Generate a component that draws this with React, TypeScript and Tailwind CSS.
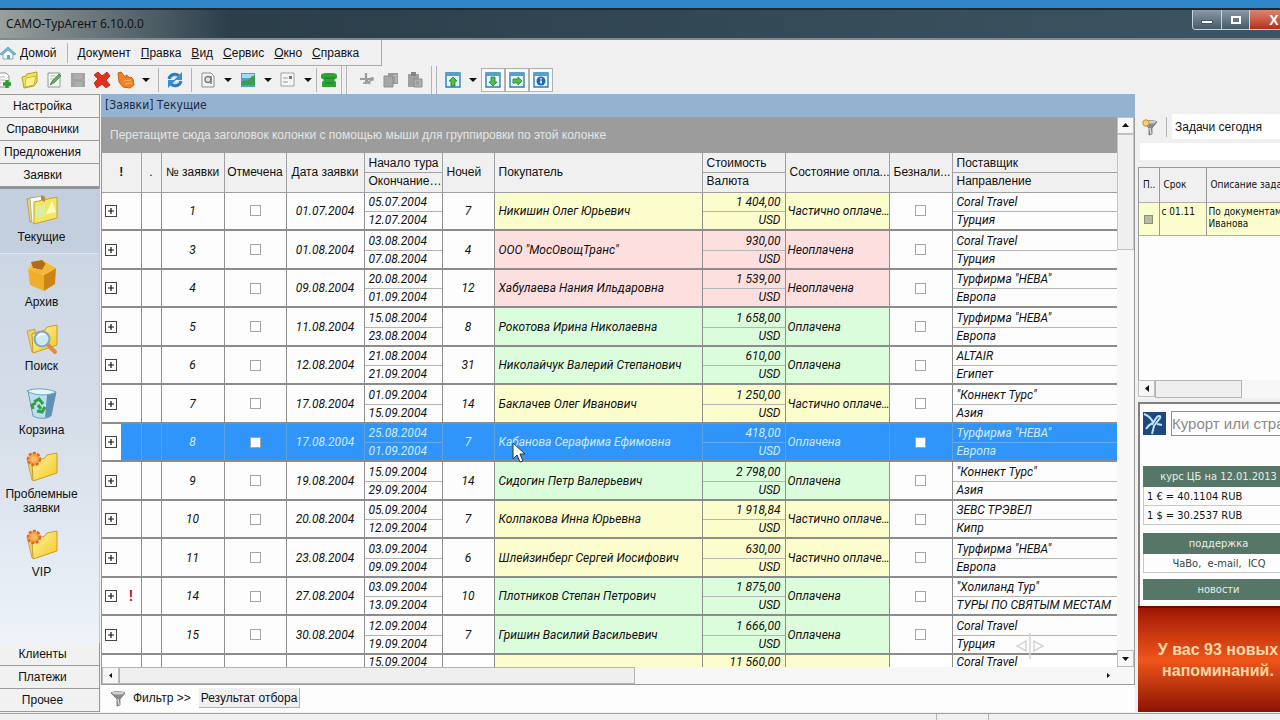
import type { ReactNode } from "react";

type Status = "part" | "none" | "paid";

type Order = {
  id: number;
  date: string;
  start: string;
  end: string;
  nights: number;
  buyer: string;
  price: string;
  status: Status;
  supplier: string;
  region: string;
  alert?: boolean;
};

const orders: Order[] = [
  { id: 1, date: "01.07.2004", start: "05.07.2004", end: "12.07.2004", nights: 7, buyer: "Никишин Олег Юрьевич", price: "1 404,00", status: "part", supplier: "Coral Travel", region: "Турция" },
  { id: 3, date: "01.08.2004", start: "03.08.2004", end: "07.08.2004", nights: 4, buyer: 'ООО "МосОвощТранс"', price: "930,00", status: "none", supplier: "Coral Travel", region: "Турция" },
  { id: 4, date: "09.08.2004", start: "20.08.2004", end: "01.09.2004", nights: 12, buyer: "Хабулаева Нания Ильдаровна", price: "1 539,00", status: "none", supplier: 'Турфирма "НЕВА"', region: "Европа" },
  { id: 5, date: "11.08.2004", start: "15.08.2004", end: "23.08.2004", nights: 8, buyer: "Рокотова Ирина Николаевна", price: "1 658,00", status: "paid", supplier: 'Турфирма "НЕВА"', region: "Европа" },
  { id: 6, date: "12.08.2004", start: "21.08.2004", end: "21.09.2004", nights: 31, buyer: "Николайчук Валерий Степанович", price: "610,00", status: "paid", supplier: "ALTAIR", region: "Египет" },
  { id: 7, date: "17.08.2004", start: "01.09.2004", end: "15.09.2004", nights: 14, buyer: "Баклачев Олег Иванович", price: "1 250,00", status: "part", supplier: '"Коннект Турс"', region: "Азия" },
  { id: 8, date: "17.08.2004", start: "25.08.2004", end: "01.09.2004", nights: 7, buyer: "Кабанова Серафима Ефимовна", price: "418,00", status: "paid", supplier: 'Турфирма "НЕВА"', region: "Европа" },
  { id: 9, date: "19.08.2004", start: "15.09.2004", end: "29.09.2004", nights: 14, buyer: "Сидогин Петр Валерьевич", price: "2 798,00", status: "paid", supplier: '"Коннект Турс"', region: "Азия" },
  { id: 10, date: "20.08.2004", start: "05.09.2004", end: "12.09.2004", nights: 7, buyer: "Колпакова Инна Юрьевна", price: "1 918,84", status: "part", supplier: "ЗЕВС ТРЭВЕЛ", region: "Кипр" },
  { id: 11, date: "23.08.2004", start: "03.09.2004", end: "09.09.2004", nights: 6, buyer: "Шлейзинберг Сергей Иосифович", price: "630,00", status: "part", supplier: 'Турфирма "НЕВА"', region: "Европа" },
  { id: 14, date: "27.08.2004", start: "03.09.2004", end: "13.09.2004", nights: 10, buyer: "Плотников Степан Петрович", price: "1 875,00", status: "paid", supplier: '"Холиланд Тур"', region: "ТУРЫ ПО СВЯТЫМ МЕСТАМ", alert: true },
  { id: 15, date: "30.08.2004", start: "12.09.2004", end: "19.09.2004", nights: 7, buyer: "Гришин Василий Васильевич", price: "1 666,00", status: "paid", supplier: "Coral Travel", region: "Турция" },
];

const statusText = { part: "Частично оплаче…", none: "Неоплачена", paid: "Оплачена" };
const statusBg = { part: "bg-[#fcfdcd]", none: "bg-[#fddfe0]", paid: "bg-[#dcfddc]" };

/* ---------- icons ---------- */

function Icon({ children, size = 18 }: { children: ReactNode; size?: number }) {
  return (
    <svg width={size} height={size} viewBox="0 0 18 18" fill="none" className="shrink-0">
      {children}
    </svg>
  );
}

const Caret = () => (
  <svg width="10" height="6" viewBox="0 0 10 6" className="shrink-0">
    <path d="M1 1h8L5 5z" fill="#111" />
  </svg>
);

const NewIcon = () => (
  <Icon>
    <path d="M-2 2H9l3 3v11H-2z" fill="#fdfdfd" stroke="#8a9490" />
    <path d="M1 6h7M1 9h7M1 12h4" stroke="#a9b3ae" />
    <path d="M10 9v8M6 13h8" stroke="#2f9a33" strokeWidth="3.4" />
  </Icon>
);

const OpenIcon = () => (
  <Icon>
    <path d="M1 6l4-1 1-2 10-2v10l-3 4-10 2z" fill="#f6e24c" stroke="#b69a2a" />
    <path d="M5 7l10-2-2 9-9 2z" fill="#fdf391" stroke="#c7ab38" strokeWidth=".8" />
  </Icon>
);

const EditIcon = () => (
  <Icon>
    <path d="M3 2h12v14H3z" fill="#f8fbf8" stroke="#8c9a92" />
    <path d="M5 5h6M5 8h4" stroke="#b2bcb6" />
    <path d="M5 14l2-4 7-7 2 2-7 7z" fill="#63a96a" stroke="#477a4b" strokeWidth=".7" />
  </Icon>
);

const SaveIcon = () => (
  <Icon>
    <path d="M2 2h14v14H2z" fill="#a3a3a3" />
    <path d="M5 3h8v5H5zM6 11h7v5H6z" fill="#adadad" />
  </Icon>
);

const DeleteIcon = () => (
  <Icon>
    <path d="M1 4l4-3 4 4 5-4 3 4-4 4 4 5-4 3-4-4-5 4-3-5 4-4z" fill="#e3301c" stroke="#b3200f" strokeWidth=".8" />
  </Icon>
);

const HandIcon = () => (
  <Icon>
    <path d="M1 2l3-1 5 6V4l2 1 1 2 2-1 2 2 1 6-4 3-7-1-4-5z" fill="#f08125" stroke="#c9600f" />
    <path d="M7 10l7-1M8 13l7-1" stroke="#fcb978" />
  </Icon>
);

const RefreshIcon = () => (
  <Icon>
    <path d="M3 8c1-5 7-6 10-3M15 10c-1 5-7 6-10 3" stroke="#2f79bd" strokeWidth="3" />
    <path d="M16 1v8H8zM2 17V9h8z" fill="#3c8ed2" />
    <path d="M5 8c1-2 4-3 6-2M13 10c-1 2-4 3-6 2" stroke="#a6d5f2" />
  </Icon>
);

const PreviewIcon = () => (
  <Icon>
    <path d="M3 2h9l3 3v11H3z" fill="#f4f4f4" stroke="#8d8d8d" />
    <circle cx="9" cy="8.500" r="3" fill="#dfe3e6" stroke="#7e7e7e" strokeWidth="1.4" />
    <path d="M12 5v8" stroke="#7e7e7e" strokeWidth="1.6" />
  </Icon>
);

const PictureIcon = () => (
  <Icon>
    <path d="M2 2h14v14H2z" fill="#4b9fd2" />
    <path d="M3 3h12v4H3z" fill="#a9d9ee" />
    <path d="M2 14v-3l4-2 3 1 4-5h3v9z" fill="#3d9d50" />
  </Icon>
);

const FormIcon = () => (
  <Icon>
    <path d="M2 2h13v13H2z" fill="#f6f6f6" stroke="#a1a1a1" />
    <path d="M4 7h5M4 11h5" stroke="#999" />
    <path d="M10 5h3v3h-3z" fill="#777" />
  </Icon>
);

const PhoneIcon = () => (
  <Icon>
    <path d="M1 7V4c1-2 4-2 8-2s7 0 8 2v3l-3 2 2 2v5H2v-5l2-2z" fill="#2da436" />
    <path d="M4 7h10M5 12h8" stroke="#197b24" />
  </Icon>
);

const CutIcon = () => (
  <Icon>
    <path d="M8 2v11M2 8h13" stroke="#9b9b9b" strokeWidth="2.2" />
    <path d="M8 8l4 5M5 12h6l3-5" stroke="#9b9b9b" strokeWidth="1.6" />
    <circle cx="14" cy="8" r="2" fill="#9b9b9b" />
  </Icon>
);

const CopyIcon = () => (
  <Icon>
    <path d="M6 2h10v11H6z" fill="#9c9c9c" />
    <path d="M2 5h9v11H2z" fill="#a6a6a6" stroke="#8d8d8d" />
    <path d="M11 5l3-1v8" stroke="#c6c6c6" />
  </Icon>
);

const PasteIcon = () => (
  <Icon>
    <path d="M2 3h11v13H2z" fill="#a0a0a0" />
    <path d="M5 1h5v4H5z" fill="#858585" />
    <path d="M8 8h8v8H8z" fill="#b0b0b0" stroke="#8d8d8d" />
    <path d="M10 11h3M10 13h3" stroke="#8d8d8d" />
  </Icon>
);

function PanelIcon({ kind }: { kind: "up" | "down" | "right" | "info" }) {
  return (
    <Icon>
      <path d="M2 2h14v14H2z" fill="#e6f7fb" stroke="#2c7fb4" strokeWidth="1.4" />
      <path d="M2 2h14v3H2z" fill="#4ea3cf" />
      {kind === "up" && <path d="M9 6l4 4h-2v5H7v-5H5z" fill="#54c04d" stroke="#1f7c2a" strokeWidth=".8" />}
      {kind === "down" && <path d="M9 15l4-4h-2V6H7v5H5z" fill="#54c04d" stroke="#1f7c2a" strokeWidth=".8" />}
      {kind === "right" && <path d="M14 10l-4-4v2H5v4h5v2z" fill="#54c04d" stroke="#1f7c2a" strokeWidth=".8" />}
      {kind === "info" && (
        <>
          <circle cx="9" cy="10" r="4.5" fill="#2565b8" />
          <path d="M9 7v1.500M9 9.500v3" stroke="#fff" strokeWidth="1.6" />
        </>
      )}
    </Icon>
  );
}

const HomeIcon = () => (
  <svg width="16" height="16" viewBox="0 0 16 16" className="shrink-0">
    <path d="M3 8v6h10V8L8 4z" fill="#f3f8fa" stroke="#7fa9b8" />
    <path d="M0 9l8-7 8 7-2 1-6-5-6 5z" fill="#73b7cf" stroke="#4b8ea8" strokeWidth=".6" />
    <path d="M7 10h3v4H7z" fill="#6f9fae" />
  </svg>
);

function FunnelIcon({ star }: { star?: boolean }) {
  return (
    <svg width="18" height="18" viewBox="0 0 18 18" className="shrink-0">
      <path d="M2 4c3-2 11-2 14 0l-5 6v6l-3 1v-7z" fill="#8b8b8b" stroke="#6c6c6c" strokeWidth=".8" />
      <path d="M9 10l1 6" stroke="#dcdcdc" strokeWidth="1.4" />
      <ellipse cx="9" cy="4" rx="6" ry="1.6" fill="#d0d0d0" />
      {star && <circle cx="5" cy="5" r="3.2" fill="#f7cf7c" stroke="#c98b2d" />}
    </svg>
  );
}

function Folder({ children }: { children?: ReactNode }) {
  return (
    <svg width="32" height="32" viewBox="0 0 32 32" className="shrink-0">
      <defs>
        <linearGradient id="folderFill" x1="0" y1="0" x2="1" y2="1">
          <stop offset="0" stopColor="#fff6a6" />
          <stop offset="1" stopColor="#f5c51f" />
        </linearGradient>
      </defs>
      <path d="M1 8l5 21 3-2V6z" fill="#ecd166" stroke="#bd9c33" strokeWidth=".8" />
      <path d="M6 11l13-4 2-3 10-2v20L7 30z" fill="url(#folderFill)" stroke="#c79d26" />
      {children}
    </svg>
  );
}

const CurrentIcon = () => (
  <svg width="32" height="32" viewBox="0 0 32 32">
    <path d="M1 5l3 23 4-1V3z" fill="#e9d36b" stroke="#b59b3e" strokeWidth=".8" />
    <path d="M4 4l14-2 1 24L6 29z" fill="#fbfbf4" stroke="#a9a78c" strokeWidth=".8" />
    <path d="M8 8l23-5v21L8 30z" fill="#f4e663" stroke="#bfa52f" />
    <path d="M10 12l9-2v12l-9 2z" fill="#d9eda3" />
    <path d="M20 20l6-13 4 11z" fill="#fffbc0" />
    <path d="M15 1l4 2v5l-4-2z" fill="#b08d42" />
  </svg>
);

const ArchiveIcon = () => (
  <svg width="32" height="32" viewBox="0 0 32 32">
    <path d="M2 10l16 6v16L4 26z" fill="#f0ae2c" />
    <path d="M18 16l12-7-1 16-11 7z" fill="#cc8513" />
    <path d="M2 10l4-7 11-2 13 8-12 7z" fill="#f8c556" />
    <path d="M5 3l2 6 9 2 4-6-4-4z" fill="#b06c16" />
    <path d="M2 10l5-1 9 2 2 5zM30 9l-10-5-4 7 2 5z" fill="#f5b83c" />
  </svg>
);

const SearchFolderIcon = () => (
  <Folder>
    <path d="M21 21l8 8" stroke="#e28b3f" strokeWidth="4" strokeLinecap="round" />
    <circle cx="16" cy="16" r="7.5" fill="#cfeaf7" stroke="#7fa8bd" strokeWidth="2" />
    <path d="M12 14c1-3 4-4 7-2" stroke="#fff" strokeWidth="1.6" fill="none" />
  </Folder>
);

const BinIcon = () => (
  <svg width="32" height="32" viewBox="0 0 32 32">
    <path d="M2 4l5 25c5 3 14 3 18 0l5-24z" fill="#bcdfed" stroke="#7297ac" />
    <path d="M21 8l9-3-5 24-6 2z" fill="#5b93b8" />
    <path d="M1 4c6-3 20-3 29 1-6 4-22 4-29-1z" fill="#e7f5fa" stroke="#6fa3be" />
    <path d="M8 15l5-3 4 5M19 20l-3 5-5-1M7 22l-1-4 4-2M12 18l3 4" fill="none" stroke="#2fa046" strokeWidth="3" />
  </svg>
);

const StarFolderIcon = () => (
  <Folder>
    <circle cx="8" cy="8" r="6" fill="#f8a14c" stroke="#e1672b" strokeWidth="2.4" strokeDasharray="3 1.4" />
    <circle cx="8" cy="8" r="3" fill="#fbb95f" />
  </Folder>
);

/* ---------- window parts ---------- */

function TitleBar() {
  return (
    <header className="flex h-8 shrink-0 items-start justify-between border-t-2 border-b-2 border-t-[#1b2a35] border-b-[#7d8a8f] bg-linear-to-r from-[#9aa09d] via-[#2b3e4a] via-18% to-[#3d5563]">
      <h1 className="px-1.5 pt-1 font-['Noto_Sans'] text-xs leading-5 text-[#10161a]">САМО-ТурАгент 6.10.0.0</h1>
      <div className="flex h-5 w-[88px] shrink-0 overflow-hidden rounded-bl border-b border-l border-[#c9d3da]">
        <button aria-label="Свернуть" className="flex w-[29px] shrink-0 items-center justify-center border-r border-[#c9d3da] bg-linear-to-b from-[#8b9ba6] to-[#465b69]">
          <span className="mt-1 h-1 w-3 border border-[#4d5960] bg-white" />
        </button>
        <button aria-label="Развернуть" className="flex w-[28px] shrink-0 items-center justify-center border-r border-[#c9d3da] bg-linear-to-b from-[#8b9ba6] to-[#465b69]">
          <span className="h-2 w-2.5 border-2 border-white" />
        </button>
        <button aria-label="Закрыть" className="flex w-[48px] shrink-0 items-center justify-center bg-linear-to-b from-[#d98672] to-[#b52b16] text-sm font-bold text-white">
          X
        </button>
      </div>
    </header>
  );
}

const menu = [
  ["Д", "окумент"],
  ["П", "равка"],
  ["В", "ид"],
  ["С", "ервис"],
  ["О", "кно"],
  ["С", "правка"],
];

function MenuBar() {
  return (
    <nav className="flex h-[26px] w-[382px] shrink-0 items-center border-r border-b border-[#a9a9a9] text-xs">
      <a href="#home" className="flex items-center gap-1">
        <HomeIcon />
        Домой
      </a>
      <span className="mr-[10px] ml-[10px] h-5 w-px bg-[#b5b5b5]" />
      <div className="flex gap-[10px]">
        {menu.map(([first, rest]) => (
          <a key={rest} href={"#" + rest}>
            <u>{first}</u>
            {rest}
          </a>
        ))}
      </div>
    </nav>
  );
}

function ToolButton({ label, on, children }: { label: string; on?: boolean; children: ReactNode }) {
  return (
    <button
      aria-label={label}
      className={on ? "flex h-6 w-6 items-center justify-center border border-[#b0b0b0] bg-[#f9f9f9]" : "flex h-6 w-6 items-center justify-center"}
    >
      {children}
    </button>
  );
}

function DropButton() {
  return (
    <button aria-label="Ещё" className="flex h-6 w-4 items-center justify-center">
      <Caret />
    </button>
  );
}

const Sep = () => <span className="mx-1 h-6 w-px shrink-0 bg-[#b5b5b5]" />;

function Toolbar() {
  return (
    <div className="flex h-7 shrink-0 items-center">
      <div className="-ml-1.5 flex items-center">
        <ToolButton label="Новый"><NewIcon /></ToolButton>
        <ToolButton label="Открыть"><OpenIcon /></ToolButton>
        <ToolButton label="Изменить"><EditIcon /></ToolButton>
        <ToolButton label="Сохранить"><SaveIcon /></ToolButton>
        <ToolButton label="Удалить"><DeleteIcon /></ToolButton>
        <ToolButton label="Пометить"><HandIcon /></ToolButton>
        <DropButton />
        <Sep />
        <ToolButton label="Обновить"><RefreshIcon /></ToolButton>
        <Sep />
        <ToolButton label="Просмотр"><PreviewIcon /></ToolButton>
        <DropButton />
        <ToolButton label="Изображение"><PictureIcon /></ToolButton>
        <DropButton />
        <ToolButton label="Форма"><FormIcon /></ToolButton>
        <DropButton />
        <span className="h-6 w-px shrink-0 bg-[#b5b5b5]" />
        <ToolButton label="Телефон"><PhoneIcon /></ToolButton>
      </div>
      <span className="mr-2 h-7 w-[6px] border-x border-[#b5b5b5]" />
      <ToolButton label="Вырезать"><CutIcon /></ToolButton>
      <ToolButton label="Копировать"><CopyIcon /></ToolButton>
      <ToolButton label="Вставить"><PasteIcon /></ToolButton>
      <span className="mx-1 h-7 w-[6px] border-x border-[#b5b5b5]" />
      <ToolButton label="Панель сверху"><PanelIcon kind="up" /></ToolButton>
      <DropButton />
      <ToolButton label="Панель снизу" on><PanelIcon kind="down" /></ToolButton>
      <ToolButton label="Панель справа" on><PanelIcon kind="right" /></ToolButton>
      <ToolButton label="Информация" on><PanelIcon kind="info" /></ToolButton>
    </div>
  );
}

const folders = [
  { name: "Текущие", icon: <CurrentIcon />, active: true },
  { name: "Архив", icon: <ArchiveIcon /> },
  { name: "Поиск", icon: <SearchFolderIcon /> },
  { name: "Корзина", icon: <BinIcon /> },
  { name: "Проблемные заявки", icon: <StarFolderIcon /> },
  { name: "VIP", icon: <StarFolderIcon /> },
];

function SideButton({ children }: { children: ReactNode }) {
  return (
    <button className="h-[23px] shrink-0 border-r border-b border-[#9a9a9a] bg-[#f1f1f1] pr-[14px] text-center">
      {children}
    </button>
  );
}

function Sidebar() {
  return (
    <aside className="flex w-[100px] shrink-0 flex-col border-t border-[#9a9a9a] text-xs">
      <SideButton>Настройка</SideButton>
      <SideButton>Справочники</SideButton>
      <SideButton>Предложения</SideButton>
      <SideButton>Заявки</SideButton>
      <div className="flex flex-1 flex-col border-t-2 border-r border-t-[#8a949c] border-r-[#c2cbd3] bg-linear-to-b from-[#c9d4e2] via-[#d5dde8] to-[#eef3fa]">
        {folders.map((f) => (
          <button
            key={f.name}
            className={
              "flex flex-col items-center gap-1 pt-[5px] pr-[16px] pb-[9px] leading-[14px] " +
              (f.active ? "border-b border-[#dde5ee] bg-[#c3cfde]" : "")
            }
          >
            {f.icon}
            {f.name}
          </button>
        ))}
      </div>
      <SideButton>Клиенты</SideButton>
      <SideButton>Платежи</SideButton>
      <SideButton>Прочее</SideButton>
    </aside>
  );
}

/* ---------- orders grid ---------- */

type PairProps = { top: string; bottom: string; line: string; align?: "left" | "right" };

function Pair({ top, bottom, line, align = "left" }: PairProps) {
  return (
    <div className={"whitespace-nowrap " + (align === "right" ? "text-right" : "")}>
      <div className={"border-b px-1 leading-[18px] " + line}>{top}</div>
      <div className="px-1 leading-[17px]">{bottom}</div>
    </div>
  );
}

function Check({ label }: { label: string }) {
  return <input type="checkbox" aria-label={label} className="mx-auto block size-[11px] appearance-none border border-[#a5a5a5] bg-white" />;
}

function OrderRow({ order }: { order: Order }) {
  const selected = order.id === 8;
  const cell = selected ? "border-r border-[#5f9fdc] overflow-hidden" : "border-r border-[#8f8f8f] overflow-hidden";
  const bg = selected ? "" : statusBg[order.status];
  const line = selected ? "border-[#62abef]" : "border-[#b5b5b5]";
  return (
    <tr className={"border-b-2 border-[#8c8c8c] odd:h-[38px] even:h-[39px] " + (selected ? "bg-[#2f95fa] text-[#cfeaff]" : "")}>
      <td className={cell}>
        <div className={"flex h-[36px] items-center " + (selected ? "w-[19px] bg-white" : "")}>
          <button
            aria-label={"Развернуть заявку " + order.id}
            className="ml-[3px] flex size-3 shrink-0 items-center justify-center border border-[#444] bg-white"
          >
            <svg width="8" height="8" viewBox="0 0 8 8"><path d="M1 4h6M4 1v6" stroke="#111" strokeWidth="1.2" /></svg>
          </button>
          {order.alert && <b className="ml-3 text-sm text-[#c3122f] not-italic">!</b>}
        </div>
      </td>
      <td className={cell} />
      <td className={cell + " text-center"}>{order.id}</td>
      <td className={cell}><Check label="Отмечена" /></td>
      <td className={cell + " px-1 text-center"}>{order.date}</td>
      <td className={cell}><Pair top={order.start} bottom={order.end} line={line} /></td>
      <td className={cell + " text-center"}>{order.nights}</td>
      <td className={cell + " px-1 whitespace-nowrap " + bg}>{order.buyer}</td>
      <td className={cell + " " + bg}><Pair top={order.price} bottom="USD" line={line} align="right" /></td>
      <td className={cell + " pl-0.5 whitespace-nowrap " + bg}>{statusText[order.status]}</td>
      <td className={cell}><Check label="Безналичный расчёт" /></td>
      <td className="overflow-hidden"><Pair top={order.supplier} bottom={order.region} line={line} /></td>
    </tr>
  );
}

function OrdersTable() {
  const th = "border-r border-[#a0a0a0] px-1 font-normal";
  const pairTh = "border-r border-[#a0a0a0] font-normal";
  return (
    <table className="w-full table-fixed border-collapse text-xs">
      <colgroup>
        <col className="w-[39px]" />
        <col className="w-[20px]" />
        <col className="w-[63px]" />
        <col className="w-[62px]" />
        <col className="w-[78px]" />
        <col className="w-[78px]" />
        <col className="w-[52px]" />
        <col className="w-[208px]" />
        <col className="w-[83px]" />
        <col className="w-[104px]" />
        <col className="w-[63px]" />
        <col />
      </colgroup>
      <thead>
        <tr className="h-[39px] border-b border-[#a0a0a0] bg-[#f0f0f0] text-left whitespace-nowrap">
          <th className={th + " text-center"}><b>!</b></th>
          <th className={th + " text-center"}>.</th>
          <th className={pairTh + " text-center"}>№ заявки</th>
          <th className={pairTh + " text-center"}>Отмечена</th>
          <th className={pairTh + " text-center"}>Дата заявки</th>
          <th className={pairTh}><Pair top="Начало тура" bottom="Окончание…" line="border-[#a0a0a0]" /></th>
          <th className={th}>Ночей</th>
          <th className={th}>Покупатель</th>
          <th className={pairTh}><Pair top="Стоимость" bottom="Валюта" line="border-[#a0a0a0]" /></th>
          <th className={th}>Состояние опла...</th>
          <th className={th}>Безнали...</th>
          <th className="font-normal"><Pair top="Поставщик" bottom="Направление" line="border-[#a0a0a0]" /></th>
        </tr>
      </thead>
      <tbody className="font-['Roboto',sans-serif] italic">
        {orders.map((o) => (
          <OrderRow key={o.id} order={o} />
        ))}
        {/* next order, only its first line shows */}
        <tr className="bg-white whitespace-nowrap">
          <td className="border-r border-[#8f8f8f]" />
          <td className="border-r border-[#8f8f8f]" />
          <td className="border-r border-[#8f8f8f]" />
          <td className="border-r border-[#8f8f8f]" />
          <td className="border-r border-[#8f8f8f]" />
          <td className="border-r border-[#8f8f8f] px-1 leading-[15px]">15.09.2004</td>
          <td className="border-r border-[#8f8f8f]" />
          <td className="border-r border-[#8f8f8f] bg-[#fcfdcd]" />
          <td className="border-r border-[#8f8f8f] bg-[#fcfdcd] px-1 text-right leading-[15px]">11 560,00</td>
          <td className="border-r border-[#8f8f8f] bg-[#fcfdcd]" />
          <td className="border-r border-[#8f8f8f]" />
          <td className="px-1 leading-[15px]">Coral Travel</td>
        </tr>
      </tbody>
    </table>
  );
}

function ScrollButton({ label, d }: { label: string; d: string }) {
  return (
    <button aria-label={label} className="flex size-[17px] shrink-0 items-center justify-center border border-[#bdbdbd] bg-[#f6f6f6]">
      <svg width="9" height="9" viewBox="0 0 9 9"><path d={d} fill="#111" /></svg>
    </button>
  );
}

function Orders() {
  return (
    <main className="ml-px flex min-w-0 flex-1 flex-col">
      <h2 className="h-[23px] shrink-0 bg-[#95b3d0] px-1 font-['DejaVu_Sans_Condensed'] text-xs leading-[22px] text-[#1a2c4c]">[Заявки] Текущие</h2>
      <div className="flex min-h-0 flex-1 border-l border-[#9a9a9a]">
        <div className="relative min-w-0 flex-1 overflow-hidden bg-[#fdfdfd]">
          <p className="h-9 bg-[#9c9c9c] px-2 text-xs leading-9 whitespace-nowrap text-[#e4e4e4]">
            Перетащите сюда заголовок колонки с помощью мыши для группировки по этой колонке
          </p>
          <OrdersTable />
          {/* mouse pointer over the selected row */}
          <svg width="14" height="21" viewBox="0 0 14 21" className="absolute top-[325px] left-[410px]">
            <path d="M1 1v16l4-4 3 7 3-1-3-7h5z" fill="#fff" stroke="#333" />
          </svg>
          <svg width="32" height="26" viewBox="0 0 32 26" className="absolute top-[516px] left-[912px]">
            <path d="M12 8v10l-9-5zM20 8v10l9-5zM16 0v26" fill="none" stroke="#d4d4d4" strokeWidth="1.5" />
          </svg>
        </div>
        <div className="flex w-[18px] shrink-0 flex-col border-r border-[#9a9a9a] bg-[#f7f7f7]">
          <ScrollButton label="Вверх" d="M4.5 2L8 6H1z" />
          <div className="h-[116px] border border-[#c4c4c4] bg-[#efefef]" />
          <div className="flex-1" />
          <ScrollButton label="Вниз" d="M4.5 7L8 3H1z" />
        </div>
      </div>
      <div className="flex shrink-0 border-r border-b border-l border-[#9a9a9a] bg-[#f7f7f7]">
        <ScrollButton label="Влево" d="M3 4.5L6 2v5z" />
        <div className="w-[516px] border border-[#b4b4b4] bg-[#efefef]" />
        <div className="flex-1" />
        <button aria-label="Вправо" className="flex size-[17px] items-center justify-center">
          <svg width="9" height="9" viewBox="0 0 9 9"><path d="M6 4.5L3 2v5z" fill="#111" /></svg>
        </button>
        <div className="w-[17px]" />
      </div>
      <div className="flex h-[27px] shrink-0 items-start bg-[#fdfdfd] pt-[3px] text-xs">
        <button className="flex h-5 items-center gap-[6px] px-2 leading-5">
          <FunnelIcon />
          Фильтр &gt;&gt;
        </button>
        <button className="h-5 border-r border-b border-[#b0b0b0] bg-[#f0f0f0] px-0.5">Результат отбора</button>
      </div>
    </main>
  );
}

/* ---------- right column ---------- */

function RightPanel() {
  const cap = "h-[21px] bg-[#567767] text-center leading-[21px] text-[#e4efe9]";
  return (
    <aside className="ml-[3px] w-[142px] shrink-0 overflow-hidden text-xs">
      <div className="flex h-full w-[160px] flex-col pt-5">
        <div className="flex h-[25px] items-center">
          <div className="flex w-[34px] items-center gap-[7px] pl-[3px]">
            <FunnelIcon star />
            <span className="h-5 w-px bg-[#b5b5b5]" />
          </div>
          <input aria-label="Задачи" defaultValue="Задачи сегодня" className="h-[25px] w-[126px] bg-white px-[3px] outline-none" />
        </div>
        <div className="mt-1 ml-0.5 h-[17px] shrink-0 bg-white" />
        <div className="mt-[7px] h-[213px] shrink-0 border-t border-l border-[#9a9a9a] bg-[#fdfdfd]">
          <table className="w-full table-fixed border-collapse font-['DejaVu_Sans_Condensed'] text-[10px] leading-3">
            <colgroup>
              <col className="w-[20px]" />
              <col className="w-[47px]" />
              <col />
            </colgroup>
            <thead>
              <tr className="h-[34px] border-b border-[#b0b0b0] bg-[#f0f0f0] text-left whitespace-nowrap">
                <th className="border-r border-[#9a9a9a] pl-1 font-normal">П..</th>
                <th className="border-r border-[#9a9a9a] pl-1 font-normal">Срок</th>
                <th className="pl-1 font-normal">Описание задачи</th>
              </tr>
            </thead>
            <tbody>
              <tr className="h-[33px] border-b border-[#b0b0b0] bg-[#fcfdcd] align-top whitespace-nowrap">
                <td className="border-r border-[#9a9a9a] pt-3 pl-[5px]">
                  <input type="checkbox" aria-label="Выполнено" className="block size-[9px] appearance-none border border-[#8d8d7c] bg-[#b9b9a8]" />
                </td>
                <td className="border-r border-[#9a9a9a] pt-[3px] pl-0.5">с 01.11</td>
                <td className="pt-[3px] pl-0.5">По документам<br />Иванова</td>
              </tr>
            </tbody>
          </table>
        </div>
        <div className="flex h-[18px] shrink-0 bg-[#f7f7f7]">
          <ScrollButton label="Влево" d="M3 4.5L7 1v7z" />
          <div className="w-[87px] border border-[#b4b4b4] bg-[#efefef]" />
        </div>
        <section className="mt-1 flex-1 border-t-2 border-l-2 border-[#808080] bg-[#fdfdfd] pt-[7px] pr-1 pl-[3px]">
          <div className="flex items-center gap-[5px]">
            <svg width="23" height="23" viewBox="0 0 23 23" className="shrink-0">
              <path d="M0 0h23v23H0z" fill="#1f477f" />
              <path d="M1 2c5 2 8 5 9 9l4-6c2-2 4-1 3 1l-6 8-2 8M10 11c-3 1-5 3-7 6M14 12l5 1" fill="none" stroke="#b8e4f5" strokeWidth="2" />
            </svg>
            <input
              aria-label="Поиск курорта"
              placeholder="Курорт или страна"
              className="h-[25px] w-[130px] border border-[#8d8d8d] bg-white text-[15px] outline-none placeholder:text-[#8a8a8a]"
            />
          </div>
          <div className="mt-[30px] font-['DejaVu_Sans_Condensed'] text-[11px]">
            <h3 className={cap}>курс ЦБ на 12.01.2013</h3>
            <p className="h-[19px] border-b border-l border-[#c9c9c9] pl-[3px] leading-[19px]">1 € = 40.1104 RUB</p>
            <p className="h-[19px] border-b border-l border-[#c9c9c9] pl-[3px] leading-[19px]">1 $ = 30.2537 RUB</p>
            <h3 className={"mt-2 " + cap}>поддержка</h3>
            <p className="h-[19px] border-b border-l border-[#c9c9c9] text-center leading-[19px] text-[#35463d]">ЧаВо, &nbsp;e-mail, &nbsp;ICQ</p>
            <h3 className={"mt-[6px] " + cap}>новости</h3>
          </div>
        </section>
        <div className="flex h-[106px] shrink-0 items-center justify-center border-t-2 border-[#6e0b06] bg-linear-to-b from-[#a01504] via-[#f0551a] to-[#8c1204] text-center text-base leading-[21px] font-bold text-[#ffd9a6]">
          У вас 93 новых<br />напоминаний.
        </div>
      </div>
    </aside>
  );
}

export default function App() {
  return (
    <div className="flex h-screen flex-col overflow-hidden bg-[#f0f0f0] font-['Liberation_Sans',sans-serif] text-[#111]">
      <div className="h-2 shrink-0 bg-[#2f86c8]" />
      <TitleBar />
      <MenuBar />
      <Toolbar />
      <div className="flex min-h-0 flex-1">
        <Sidebar />
        <Orders />
        <RightPanel />
      </div>
      <footer className="mt-px flex h-[7px] shrink-0 justify-end border-t border-[#a0a0a0]">
        <span className="w-[52px] border-l border-[#b5b5b5]" />
        <span className="w-[292px] border-l border-[#b5b5b5]" />
      </footer>
    </div>
  );
}
